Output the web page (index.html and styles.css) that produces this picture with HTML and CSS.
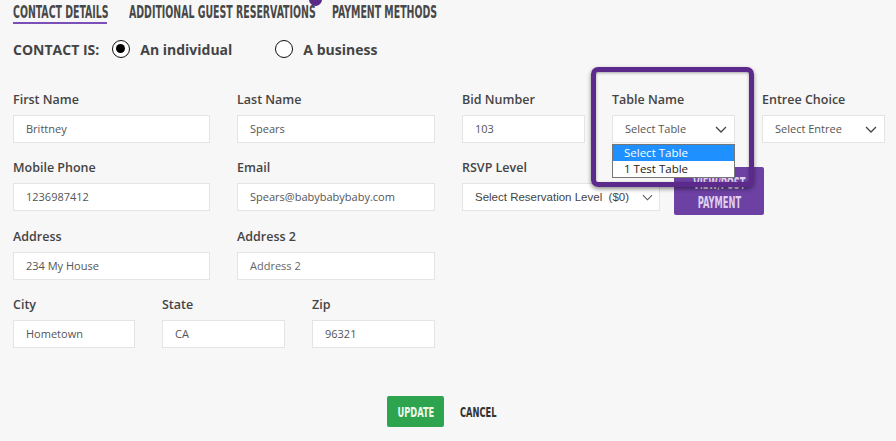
FILE: index.html
```html
<!DOCTYPE html>
<html>
<head>
<meta charset="utf-8">
<link rel="stylesheet" href="styles.css">
</head>
<body>
<div class="page">
  <nav class="tabs">
    <span class="tab active t1"><span class="cond">CONTACT DETAILS</span></span>
    <span class="tab badged t2"><span class="cond">ADDITIONAL GUEST RESERVATIONS</span><span class="badge"></span></span>
    <span class="tab t3"><span class="cond">PAYMENT METHODS</span></span>
  </nav>

  <div class="contact-row">
    <span class="contact-label">CONTACT IS:</span>
    <span class="radio checked"></span>
    <span class="radio-text">An individual</span>
    <span class="radio second"></span>
    <span class="radio-text">A business</span>
  </div>

  <div class="form">
    <div class="left">
      <div class="row two">
        <div class="field"><label>First Name</label><div class="input">Brittney</div></div>
        <div class="field"><label>Last Name</label><div class="input">Spears</div></div>
      </div>
      <div class="row two">
        <div class="field"><label>Mobile Phone</label><div class="input">1236987412</div></div>
        <div class="field"><label>Email</label><div class="input">Spears@babybabybaby.com</div></div>
      </div>
      <div class="row two">
        <div class="field"><label>Address</label><div class="input">234 My House</div></div>
        <div class="field"><label>Address 2</label><div class="input placeholder">Address 2</div></div>
      </div>
      <div class="row three">
        <div class="field"><label>City</label><div class="input">Hometown</div></div>
        <div class="field"><label>State</label><div class="input">CA</div></div>
        <div class="field"><label>Zip</label><div class="input">96321</div></div>
      </div>
    </div>

    <div class="right">
      <div class="row three-r">
        <div class="field"><label>Bid Number</label><div class="input">103</div></div>
        <div class="field table-field">
          <label>Table Name</label>
          <div class="input select">Select Table<svg class="chev" viewBox="0 0 12 7" width="12" height="7"><path d="M1 1l5 5 5-5" fill="none" stroke="#444" stroke-width="1.3"/></svg></div>
          <div class="listbox">
            <div class="opt sel">Select Table</div>
            <div class="opt">1 Test Table</div>
          </div>
        </div>
        <div class="field"><label>Entree Choice</label><div class="input select">Select Entree<svg class="chev" viewBox="0 0 12 7" width="12" height="7"><path d="M1 1l5 5 5-5" fill="none" stroke="#444" stroke-width="1.3"/></svg></div></div>
      </div>
      <div class="row rsvp-row">
        <div class="field rsvp"><label>RSVP Level</label><div class="input select arial">Select Reservation Level&nbsp;&nbsp;($0)<svg class="chev" viewBox="0 0 12 7" width="11" height="7"><path d="M1 1l5 5 5-5" fill="none" stroke="#555" stroke-width="1.2"/></svg></div></div>
        <button class="pay-btn"><span class="cond-c">VIEW/POST<br>PAYMENT</span></button>
      </div>
    </div>
  </div>

  <div class="actions">
    <button class="update"><span class="cond-c">UPDATE</span></button>
    <span class="cancel"><span class="cond">CANCEL</span></span>
  </div>
</div>
<div class="highlight"></div>
</body>
</html>
```

FILE: styles.css
```css
html, body {
  margin: 0;
  padding: 0;
  background: #f7f7f7;
  font-family: "Open Sans", "DejaVu Sans", sans-serif;
  color: #444;
}
.page {
  padding: 0 13px;
  position: relative;
}
.cond, .cond-c {
  display: inline-block;
  white-space: nowrap;
  font-family: "DejaVu Sans Condensed", "DejaVu Sans", sans-serif;
  font-weight: bold;
  transform: scaleX(0.615);
  transform-origin: left center;
}
.cond-c {
  transform-origin: center center;
}
.tabs {
  display: flex;
  gap: 22px;
  height: 24px;
}
.tab {
  font-size: 17px;
  line-height: 20px;
  padding-top: 2px;
  height: 20px;
  color: #484848;
  border-bottom: 2px solid transparent;
  white-space: nowrap;
}
.t1 { width: 94px; }
.t2 { width: 181px; }
.t3 { width: 104px; }
.tab.active {
  border-bottom-color: #7b4fb8;
}
.badged {
  position: relative;
}
.badge {
  position: absolute;
  right: -12px;
  top: -7px;
  width: 13px;
  height: 13px;
  border-radius: 50%;
  background: #5a2a86;
}
.contact-row {
  display: flex;
  align-items: center;
  height: 24px;
  margin-top: 13px;
}
.contact-label {
  font-weight: bold;
  font-size: 14px;
  color: #444;
  margin-right: 13px;
}
.radio {
  width: 18px;
  height: 18px;
  box-sizing: border-box;
  border: 1.5px solid #111;
  border-radius: 50%;
  background: #fff;
  position: relative;
  margin-right: 10px;
}
.radio.checked::after {
  content: "";
  position: absolute;
  left: 3px;
  top: 3px;
  width: 9px;
  height: 9px;
  border-radius: 50%;
  background: #000;
}
.radio.second {
  margin-left: 43px;
}
.radio-text {
  font-weight: bold;
  font-size: 14px;
  color: #444;
}
.form {
  display: flex;
  gap: 27px;
  margin-top: 29px;
}
.left {
  width: 422px;
}
.right {
  width: 423px;
}
.row {
  display: grid;
  column-gap: 27px;
}
.row.two {
  grid-template-columns: 197px 198px;
}
.row.three {
  grid-template-columns: 122px 123px 123px;
}
.row.three-r {
  grid-template-columns: 123px 123px 123px;
}
.row.rsvp-row {
  display: flex;
  align-items: flex-start;
  column-gap: 14px;
}
.rsvp {
  width: 198px;
}
.field {
  margin-bottom: 15.25px;
  position: relative;
}
.field label {
  display: block;
  font-size: 12.5px;
  font-weight: 600;
  line-height: 18px;
  padding-top: 1px;
  margin-bottom: 6px;
  color: #444;
}
.input {
  height: 28px;
  box-sizing: border-box;
  background: #fff;
  border: 1px solid #e4e4e4;
  padding: 0 12px;
  font-size: 11px;
  line-height: 26px;
  color: #555;
  white-space: nowrap;
  overflow: hidden;
  position: relative;
}
.placeholder {
  color: #666;
}
.select .chev {
  position: absolute;
  right: 7px;
  top: 10px;
}
.select.arial {
  font-family: "Liberation Sans", Arial, sans-serif;
  font-size: 11.5px;
  padding-left: 12px;
  color: #444;
}
.select.arial .chev {
  right: 6px;
}
.listbox {
  position: absolute;
  left: 0;
  top: 54px;
  width: 123px;
  box-sizing: border-box;
  border: 1px solid #767676;
  background: #fff;
  z-index: 3;
}
.opt {
  height: 16px;
  line-height: 16px;
  font-size: 11.5px;
  padding-left: 11px;
  color: #222;
}
.opt.sel {
  background: #1e90ff;
  color: #fff;
}
.pay-btn {
  margin-top: 9px;
  width: 90px;
  height: 48px;
  border: none;
  border-radius: 2px;
  background: #6d40a4;
  color: #dcd0ec;
  font-size: 15px;
  line-height: 19px;
  padding: 6px 0 0;
  text-align: center;
}
.actions {
  display: flex;
  align-items: center;
  margin-top: 33px;
  padding-left: 374px;
  gap: 16px;
}
.update {
  width: 57px;
  height: 31px;
  border: none;
  border-radius: 2px;
  background: #2ea44f;
  color: #eef8ee;
  font-size: 14px;
  padding: 0;
  text-align: center;
}
.update .cond-c, .cancel .cond {
  transform: scaleX(0.66);
}
.cancel {
  font-size: 14px;
  color: #333;
  width: 36px;
  white-space: nowrap;
}
.highlight {
  position: absolute;
  left: 591px;
  top: 67px;
  width: 163px;
  height: 120px;
  box-sizing: border-box;
  border: 5px solid #5b2a8a;
  border-radius: 7px;
  box-shadow: 0 2px 4px rgba(0,0,0,0.45), inset 0 1px 3px rgba(0,0,0,0.35);
  z-index: 5;
}
```
